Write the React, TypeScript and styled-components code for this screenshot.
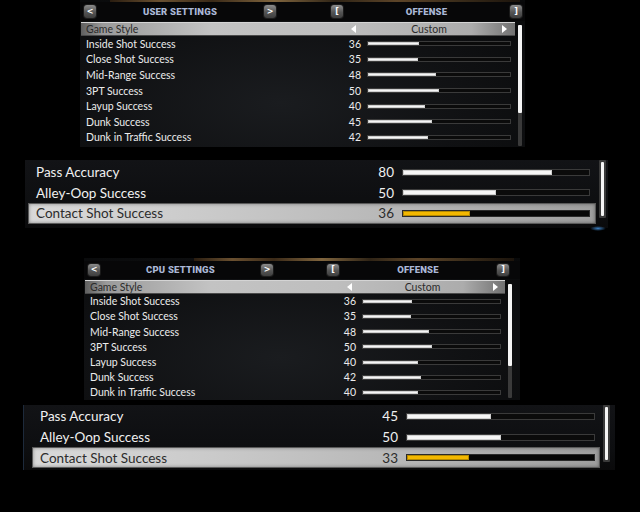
import styled, { createGlobalStyle } from "styled-components";

const GlobalStyle = createGlobalStyle`
  html, body {
    margin: 0;
    padding: 0;
    background: #000;
  }
  body {
    font-family: Lato, "Open Sans", sans-serif;
  }
`;

const Page = styled.div`
  width: 640px;
  height: 512px;
  overflow: hidden;
  background: #000;
  display: flex;
  flex-direction: column;
`;

/* ---------- small (in-game menu) panels ---------- */

interface BoxProps {
  $ml: number;
  $mt: number;
  $w: number;
  $h: number;
}

const SmallPanel = styled.section<BoxProps>`
  flex-shrink: 0;
  margin-left: ${(p) => p.$ml}px;
  margin-top: ${(p) => p.$mt}px;
  width: ${(p) => p.$w}px;
  height: ${(p) => p.$h}px;
  display: flex;
  flex-direction: column;
  background: radial-gradient(
    ellipse at 45% 70%,
    #1a1c1f 0%,
    #101113 55%,
    #08090a 100%
  );
`;

const TopStrip = styled.div<{ $h: number; $ml: number; $w: number }>`
  height: ${(p) => p.$h}px;
  margin-left: ${(p) => p.$ml}px;
  width: ${(p) => p.$w}px;
  background: linear-gradient(
    90deg,
    #2a1d10 0%,
    #6a5030 12%,
    #3b2a18 25%,
    #80653e 40%,
    #2f2416 55%,
    #5c4428 70%,
    #3a2c1a 85%,
    #1c140c 100%
  );
`;

const Header = styled.header<{ $h: number }>`
  height: ${(p) => p.$h}px;
  display: flex;
  align-items: center;
  background: #070708;
`;

const HeaderHalf = styled.div<{ $ml: number; $w: number }>`
  margin-left: ${(p) => p.$ml}px;
  width: ${(p) => p.$w}px;
  display: flex;
  align-items: center;
`;

const KeyButton = styled.span<{ $size: number }>`
  width: 12px;
  height: ${(p) => p.$size}px;
  flex-shrink: 0;
  display: flex;
  align-items: center;
  justify-content: center;
  border-radius: 3px;
  background: linear-gradient(#8c8c8c, #555 55%, #3e3e3e);
  box-shadow: 0 0 0 1px #1b1b1b;
  color: #fff;
  font-family: "DejaVu Sans", sans-serif;
  font-weight: bold;
  font-size: 8px;
  line-height: 1;
`;

const Title = styled.span`
  flex: 1;
  text-align: center;
  color: #aab7d6;
  font-family: Roboto, "Liberation Sans", sans-serif;
  font-weight: 900;
  font-size: 9.5px;
  letter-spacing: 0.2px;
`;

const Body = styled.div`
  display: flex;
  margin-top: 1px;
`;

const List = styled.div<{ $ml: number; $w: number; $pt?: number }>`
  margin-left: ${(p) => p.$ml}px;
  width: ${(p) => p.$w}px;
  padding-top: ${(p) => p.$pt ?? 0}px;
  display: flex;
  flex-direction: column;
`;

const GameRow = styled.div<{ $h: number; $sel: number; $pr: number }>`
  height: ${(p) => p.$h}px;
  display: grid;
  grid-template-columns: 1fr ${(p) => p.$sel}px;
  align-items: center;
  padding: 0 ${(p) => p.$pr}px 0 5px;
  background: linear-gradient(
    90deg,
    #5f5f5f 0%,
    #9a9a9a 5%,
    #c3c3c3 30%,
    #bebebe 60%,
    #acacac 90%,
    #727272 100%
  );
  box-shadow: inset 0 1px 0 #d4d4d4, inset 0 -1px 0 #4a4a4a;
  color: #2b2b2b;
  font-size: 10.5px;
`;

const Selector = styled.div`
  display: flex;
  align-items: center;
  justify-content: space-between;
`;

const SelectValue = styled.span`
  color: #2b2b2b;
`;

const StatRow = styled.div<{ $h: number; $bar: number; $pr: number; $gap: number }>`
  height: ${(p) => p.$h}px;
  display: grid;
  grid-template-columns: 1fr auto ${(p) => p.$bar}px;
  column-gap: ${(p) => p.$gap}px;
  align-items: center;
  padding: 0 ${(p) => p.$pr}px 0 5px;
  color: #ececec;
  font-size: 10.5px;
  white-space: nowrap;
`;

const Value = styled.span`
  text-align: right;
`;

const Track = styled.div<{ $h: number; $active?: boolean }>`
  height: ${(p) => p.$h}px;
  box-sizing: border-box;
  border: 1px solid ${(p) => (p.$active ? "#2a2a2a" : "#3a3a3a")};
  background: ${(p) => (p.$active ? "#060606" : "#0b0b0b")};
  display: flex;
`;

const Fill = styled.div<{ $active?: boolean }>`
  height: 100%;
  background: ${(p) => (p.$active ? "#f3b800" : "#f6f6f6")};
  box-shadow: ${(p) =>
    p.$active ? "inset 0 0 0 1px #b58a00" : "inset 0 0 0 1px #cfcfcf"};
`;

const Scroll = styled.div<{ $ml: number; $mt: number; $w: number; $h: number; $pad: number }>`
  flex-shrink: 0;
  margin-left: ${(p) => p.$ml}px;
  margin-top: ${(p) => p.$mt}px;
  width: ${(p) => p.$w}px;
  height: ${(p) => p.$h}px;
  box-sizing: border-box;
  padding: ${(p) => p.$pad}px;
  background: #3a3a3a;
  border-radius: 1px;
`;

const Thumb = styled.div<{ $h: number }>`
  height: ${(p) => p.$h}px;
  background: #f5f5f5;
  border-radius: 1px;
`;

/* ---------- large (zoomed) panels ---------- */

const BigPanel = styled.section<BoxProps & { $edge?: boolean }>`
  position: relative;
  flex-shrink: 0;
  margin-left: ${(p) => p.$ml}px;
  margin-top: ${(p) => p.$mt}px;
  width: ${(p) => p.$w}px;
  height: ${(p) => p.$h}px;
  box-sizing: border-box;
  display: flex;
  background: linear-gradient(180deg, #121316 0%, #0d0e10 70%, #0a0a0b 100%);
  border-left: ${(p) => (p.$edge ? "1px solid #1d2a3b" : "none")};

  &::after {
    content: "";
    position: absolute;
    right: 2px;
    bottom: -3px;
    width: 16px;
    height: 5px;
    border-radius: 50%;
    background: radial-gradient(ellipse, #3d7fc0 0%, rgba(30, 80, 140, 0) 70%);
    display: ${(p) => (p.$edge ? "none" : "block")};
  }
`;

const BigRow = styled.div<{ $h: number; $bar: number; $pr: number; $gap: number; $active?: boolean }>`
  height: ${(p) => p.$h}px;
  display: grid;
  grid-template-columns: 1fr auto ${(p) => p.$bar}px;
  column-gap: ${(p) => p.$gap}px;
  align-items: center;
  padding: 0 ${(p) => p.$pr}px 0 8px;
  font-size: 13.5px;
  white-space: nowrap;
  color: ${(p) => (p.$active ? "#2c2c2c" : "#f0f0f0")};
  background: ${(p) =>
    p.$active
      ? "linear-gradient(90deg, #d9d9d9 0%, #cbcbcb 30%, #b4b4b4 70%, #9e9e9e 100%)"
      : "transparent"};
  box-shadow: ${(p) =>
    p.$active ? "inset 0 0 0 1px #5a5a5a, inset 0 0 4px rgba(0,0,0,0.55)" : "none"};
`;

/* ---------- data ---------- */

interface Stat {
  name: string;
  value: number;
}

const userStats: Stat[] = [
  { name: "Inside Shot Success", value: 36 },
  { name: "Close Shot Success", value: 35 },
  { name: "Mid-Range Success", value: 48 },
  { name: "3PT Success", value: 50 },
  { name: "Layup Success", value: 40 },
  { name: "Dunk Success", value: 45 },
  { name: "Dunk in Traffic Success", value: 42 },
];

const cpuStats: Stat[] = [
  { name: "Inside Shot Success", value: 36 },
  { name: "Close Shot Success", value: 35 },
  { name: "Mid-Range Success", value: 48 },
  { name: "3PT Success", value: 50 },
  { name: "Layup Success", value: 40 },
  { name: "Dunk Success", value: 42 },
  { name: "Dunk in Traffic Success", value: 40 },
];

const userMore: Stat[] = [
  { name: "Pass Accuracy", value: 80 },
  { name: "Alley-Oop Success", value: 50 },
  { name: "Contact Shot Success", value: 36 },
];

const cpuMore: Stat[] = [
  { name: "Pass Accuracy", value: 45 },
  { name: "Alley-Oop Success", value: 50 },
  { name: "Contact Shot Success", value: 33 },
];

const Arrow = ({ dir }: { dir: "left" | "right" }) => (
  <svg width="5" height="8" viewBox="0 0 5 8">
    <polygon
      points={dir === "left" ? "5,0 5,8 0,4" : "0,0 0,8 5,4"}
      fill="#fff"
    />
  </svg>
);

interface MenuLayout {
  ml: number;
  mt: number;
  w: number;
  h: number;
  strip: [number, number, number];
  headerH: number;
  btn: number;
  halves: [number, number, number, number];
  listMl: number;
  listW: number;
  gameH: number;
  sel: number;
  selPr: number;
  rowH: number;
  bar: number;
  scroll: [number, number, number, number];
}

const MenuPanel = ({
  title,
  stats,
  l,
}: {
  title: string;
  stats: Stat[];
  l: MenuLayout;
}) => (
  <SmallPanel $ml={l.ml} $mt={l.mt} $w={l.w} $h={l.h}>
    <TopStrip $h={l.strip[0]} $ml={l.strip[1]} $w={l.strip[2]} />
    <Header $h={l.headerH}>
      <HeaderHalf $ml={l.halves[0]} $w={l.halves[1]}>
        <KeyButton $size={l.btn}>&lt;</KeyButton>
        <Title>{title}</Title>
        <KeyButton $size={l.btn}>&gt;</KeyButton>
      </HeaderHalf>
      <HeaderHalf $ml={l.halves[2]} $w={l.halves[3]}>
        <KeyButton $size={l.btn}>[</KeyButton>
        <Title>OFFENSE</Title>
        <KeyButton $size={l.btn}>]</KeyButton>
      </HeaderHalf>
    </Header>
    <Body>
      <List $ml={l.listMl} $w={l.listW}>
        <GameRow $h={l.gameH} $sel={l.sel} $pr={l.selPr}>
          <span>Game Style</span>
          <Selector>
            <Arrow dir="left" />
            <SelectValue>Custom</SelectValue>
            <Arrow dir="right" />
          </Selector>
        </GameRow>
        {stats.map((s) => (
          <StatRow key={s.name} $h={l.rowH} $bar={l.bar} $pr={4} $gap={6}>
            <span>{s.name}</span>
            <Value>{s.value}</Value>
            <Track $h={5}>
              <Fill style={{ width: `${s.value}%` }} />
            </Track>
          </StatRow>
        ))}
      </List>
      <Scroll
        $ml={l.scroll[0]}
        $mt={l.scroll[1]}
        $w={4}
        $h={l.scroll[2]}
        $pad={0}
      >
        <Thumb $h={l.scroll[3]} />
      </Scroll>
    </Body>
  </SmallPanel>
);

interface ZoomLayout {
  ml: number;
  mt: number;
  w: number;
  h: number;
  edge?: boolean;
  listMl: number;
  listW: number;
  pt: number;
  rowH: number;
  bar: number;
  pr: number;
  scroll: [number, number, number];
}

const ZoomPanel = ({ stats, l }: { stats: Stat[]; l: ZoomLayout }) => (
  <BigPanel $ml={l.ml} $mt={l.mt} $w={l.w} $h={l.h} $edge={l.edge}>
    <List $ml={l.listMl} $w={l.listW} $pt={l.pt}>
      {stats.map((s, i) => {
        const active = i === stats.length - 1;
        return (
          <BigRow
            key={s.name}
            $h={l.rowH}
            $bar={l.bar}
            $pr={l.pr}
            $gap={8}
            $active={active}
          >
            <span>{s.name}</span>
            <Value>{s.value}</Value>
            <Track $h={7} $active={active}>
              <Fill $active={active} style={{ width: `${s.value}%` }} />
            </Track>
          </BigRow>
        );
      })}
    </List>
    <Scroll $ml={l.scroll[0]} $mt={l.scroll[1]} $w={7} $h={l.scroll[2]} $pad={2}>
      <Thumb $h={l.scroll[2] - 4} />
    </Scroll>
  </BigPanel>
);

const userLayout: MenuLayout = {
  ml: 80,
  mt: 0,
  w: 445,
  h: 147,
  strip: [2, 30, 410],
  headerH: 19,
  btn: 13,
  halves: [4, 192, 55, 191],
  listMl: 1,
  listW: 434,
  gameH: 14,
  sel: 156,
  selPr: 8,
  rowH: 15.6,
  bar: 144,
  scroll: [3, 3, 121, 88],
};

const cpuLayout: MenuLayout = {
  ml: 84,
  mt: 30,
  w: 436,
  h: 142,
  strip: [3, 110, 320],
  headerH: 18,
  btn: 12,
  halves: [4, 185, 54, 182],
  listMl: 1,
  listW: 420,
  gameH: 14,
  sel: 151,
  selPr: 7,
  rowH: 15.2,
  bar: 139,
  scroll: [3, 4, 114, 82],
};

const userZoom: ZoomLayout = {
  ml: 25,
  mt: 13,
  w: 583,
  h: 68,
  listMl: 3,
  listW: 568,
  pt: 2,
  rowH: 20.5,
  bar: 188,
  pr: 6,
  scroll: [3, 0, 58],
};

const cpuZoom: ZoomLayout = {
  ml: 23,
  mt: 5,
  w: 592,
  h: 65,
  edge: true,
  listMl: 8,
  listW: 568,
  pt: 1,
  rowH: 20.7,
  bar: 189,
  pr: 5,
  scroll: [3, 0, 57],
};

export default function App() {
  return (
    <>
      <GlobalStyle />
      <Page>
        <MenuPanel title="USER SETTINGS" stats={userStats} l={userLayout} />
        <ZoomPanel stats={userMore} l={userZoom} />
        <MenuPanel title="CPU SETTINGS" stats={cpuStats} l={cpuLayout} />
        <ZoomPanel stats={cpuMore} l={cpuZoom} />
      </Page>
    </>
  );
}
